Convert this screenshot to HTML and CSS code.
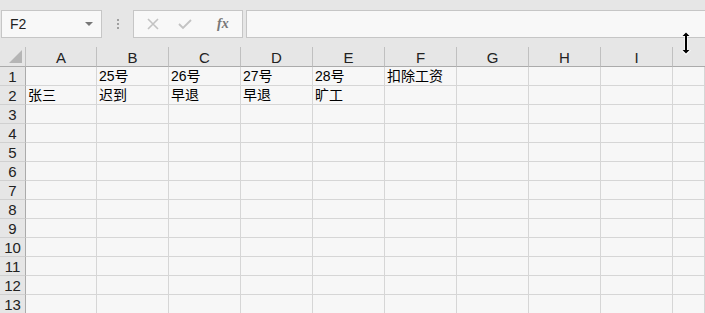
FILE: index.html
```html
<!DOCTYPE html>
<html>
<head>
    <title>工作表</title>
    <link rel="stylesheet" href="styles.css">
</head>
<body>
    <div class="toolbar">
        <div class="namebox">
            <span>F2</span>
            <span class="caret"></span>
        </div>
        <div class="grip"><i></i><i></i><i></i></div>
        <div class="fbuttons">
            <svg class="ficon cancel" width="14" height="14" viewBox="0 0 14 14"><path d="M2 2 L12 12 M12 2 L2 12" stroke="#c3c3c3" stroke-width="1.6" fill="none"/></svg>
            <svg class="ficon enter" width="16" height="14" viewBox="0 0 16 14"><path d="M2 7 L6 11 L14 3" stroke="#c3c3c3" stroke-width="1.8" fill="none"/></svg>
            <span class="fx">fx</span>
        </div>
        <div class="formula"></div>
    </div>

    <div class="sheet">
        <div class="corner"><span></span></div>
        <div class="colhead">A</div>
        <div class="colhead">B</div>
        <div class="colhead">C</div>
        <div class="colhead">D</div>
        <div class="colhead">E</div>
        <div class="colhead">F</div>
        <div class="colhead">G</div>
        <div class="colhead">H</div>
        <div class="colhead">I</div>
        <div class="colhead last"></div>
    </div>
    <div class="sheet" id="rows"></div>

    <svg class="cursor" width="14" height="26" viewBox="0 0 14 26">
        <path d="M7 1 L12 6 L8.5 6 L8.5 20 L12 20 L7 25 L2 20 L5.5 20 L5.5 6 L2 6 Z" fill="#fff"/>
        <path d="M7 2.5 L10.5 6 L8 6 L8 20 L10.5 20 L7 23.5 L3.5 20 L6 20 L6 6 L3.5 6 Z" fill="#000"/>
    </svg>

    <script>
        const data = {
            1: ['', '25号', '26号', '27号', '28号', '扣除工资', '', '', '', ''],
            2: ['张三', '迟到', '早退', '早退', '旷工', '', '', '', '', '']
        };
        const rows = document.getElementById('rows');
        for (let r = 1; r <= 13; r++) {
            const head = document.createElement('div');
            head.className = 'rowhead';
            head.innerText = r;
            rows.appendChild(head);
            const vals = data[r] || ['', '', '', '', '', '', '', '', '', ''];
            vals.forEach(function (v) {
                const cell = document.createElement('div');
                cell.className = 'cell';
                cell.innerText = v;
                rows.appendChild(cell);
            });
        }
    </script>
</body>
</html>
```

FILE: styles.css
```css
body {
    margin: 0;
    width: 705px;
    height: 313px;
    overflow: hidden;
    background-color: #f7f7f7;
    font-family: 'Liberation Sans', 'Noto Sans CJK SC', sans-serif;
    position: relative;
}

.toolbar {
    height: 47px;
    background-color: #e6e6e6;
    display: flex;
    align-items: flex-start;
    padding-top: 10px;
    box-sizing: border-box;
}

.namebox {
    margin-left: 1px;
    width: 101px;
    height: 28px;
    box-sizing: border-box;
    border: 1px solid #c6c6c6;
    background-color: #f8f8f8;
    display: flex;
    align-items: center;
    justify-content: space-between;
    padding: 0 8px 0 8px;
    font-size: 14px;
    color: #222;
}

.caret {
    width: 0;
    height: 0;
    border-left: 4px solid transparent;
    border-right: 4px solid transparent;
    border-top: 4px solid #777;
}

.grip {
    width: 31px;
    height: 28px;
    display: flex;
    flex-direction: column;
    align-items: center;
    justify-content: center;
    gap: 2px;
}

.grip i {
    width: 2px;
    height: 2px;
    background-color: #a0a0a0;
}

.fbuttons {
    width: 110px;
    height: 28px;
    box-sizing: border-box;
    border: 1px solid #c6c6c6;
    background-color: #f8f8f8;
    display: flex;
    align-items: center;
    padding-left: 12px;
}

.enter {
    margin-left: 17px;
}

.fx {
    margin-left: 24px;
    font-family: 'Liberation Serif', serif;
    font-style: italic;
    font-weight: bold;
    font-size: 14px;
    color: #777;
}

.formula {
    flex: 1;
    margin-left: 3px;
    height: 28px;
    box-sizing: border-box;
    border: 1px solid #c6c6c6;
    border-right: none;
    background-color: #f8f8f8;
}

.sheet {
    display: grid;
    grid-template-columns: 26px 71px repeat(8, 72px) 1fr;
}

.sheet > div {
    box-sizing: border-box;
    border-right: 1px solid #d6d6d6;
    border-bottom: 1px solid #d6d6d6;
}

.corner {
    height: 20px;
    background-color: #e6e6e6;
    border-bottom: 1px solid #ababab !important;
    border-right: 1px solid #c0c0c0 !important;
    display: flex;
    align-items: flex-end;
    justify-content: flex-end;
    padding: 0 3px 3px 0;
}

.corner span {
    width: 0;
    height: 0;
    border-left: 13px solid transparent;
    border-bottom: 13px solid #b5b5b5;
}

.colhead {
    height: 20px;
    background-color: #e6e6e6;
    border-bottom: 1px solid #ababab !important;
    border-right: 1px solid #c0c0c0 !important;
    text-align: center;
    font-size: 15px;
    line-height: 21px;
    color: #222;
}

.colhead.last {
    border-right: none !important;
}

.rowhead {
    height: 19px;
    background-color: #e6e6e6;
    border-right: 1px solid #ababab !important;
    border-bottom: 1px solid #d0d0d0 !important;
    text-align: center;
    font-size: 15px;
    line-height: 20px;
    color: #222;
}

.cell {
    height: 19px;
    padding-left: 2px;
    font-size: 14px;
    line-height: 19px;
    color: #000;
    white-space: nowrap;
}

.cursor {
    position: absolute;
    left: 679px;
    top: 30px;
}
```
